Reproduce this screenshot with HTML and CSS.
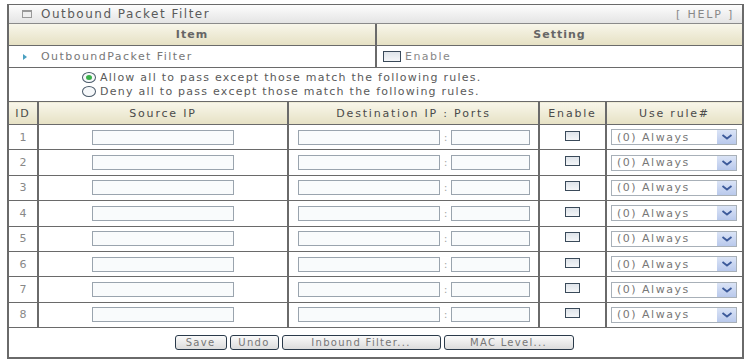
FILE: index.html
```html
<!DOCTYPE html>
<html lang="en">
<head>
  <meta charset="UTF-8">
  <title>Outbound Packet Filter</title>
  <link rel="stylesheet" href="styles.css">
</head>
<body>

<div class="panel">
  <div class="title-bar">
    <span class="title-icon"></span>
    <span class="title-text">Outbound Packet Filter</span>
    <a class="help-link" href="#">[ HELP ]</a>
  </div>

  <table class="item-table">
    <tr class="head-row">
      <th class="item-col">Item</th>
      <th>Setting</th>
    </tr>
    <tr>
      <td class="item-col"><span class="bullet"></span>OutboundPacket Filter</td>
      <td><label class="check-label"><input type="checkbox" class="box">Enable</label></td>
    </tr>
  </table>

  <div class="radio-box">
    <label><input type="radio" name="mode" class="radio" checked>Allow all to pass except those match the following rules.</label>
    <label><input type="radio" name="mode" class="radio">Deny all to pass except those match the following rules.</label>
  </div>

  <table class="rule-table">
    <tr class="head-row">
      <th class="c-id">ID</th>
      <th class="c-src">Source IP</th>
      <th class="c-dst">Destination IP : Ports</th>
      <th class="c-en">Enable</th>
      <th class="c-rule">Use rule#</th>
    </tr>
    <tbody id="rules"></tbody>
  </table>

  <div class="button-row">
    <button class="btn btn-save">Save</button>
    <button class="btn btn-undo">Undo</button>
    <button class="btn btn-in">Inbound Filter...</button>
    <button class="btn btn-mac">MAC Level...</button>
  </div>
</div>

<script>
function baueZeilen() {
  const tbody = document.getElementById('rules');
  let html = '';
  for (let i = 1; i <= 8; i++) {
    html += `<tr>
      <td class="c-id">${i}</td>
      <td class="c-src"><input type="text" class="ip-in"></td>
      <td class="c-dst"><input type="text" class="dst-in"><span class="colon">:</span><input type="text" class="port-in"></td>
      <td class="c-en"><input type="checkbox" class="box"></td>
      <td class="c-rule"><span class="select">(0) Always<span class="arrow"><svg width="12" height="8" viewBox="0 0 12 8"><path d="M1.5 2 L6 5.5 L10.5 2" fill="none" stroke="#3c5a9a" stroke-width="1.8"/></svg></span></span></td>
    </tr>`;
  }
  tbody.innerHTML = html;
}

baueZeilen();
</script>

</body>
</html>
```

FILE: styles.css
```css
body {
  margin: 0;
  background: #fff;
  font-family: "DejaVu Sans", Verdana, sans-serif;
  font-size: 11px;
  color: #777;
}
.panel {
  margin: 4px 0 0 7px;
  width: 733px;
  border: 2px solid #6a6a6a;
  border-top-width: 1px;
}
.title-bar {
  display: flex;
  align-items: center;
  height: 18px;
  padding: 0 8px 0 13px;
  background: linear-gradient(#fdfdfd, #e4e4e4);
  border-bottom: 1px solid #8a8a8a;
}
.title-icon {
  width: 8px;
  height: 5px;
  border: 1px solid #999;
  border-top-width: 2px;
  background: #eee;
  margin-right: 9px;
}
.title-text {
  color: #5a5a5a;
  font-size: 12px;
  letter-spacing: 1.5px;
}
.help-link {
  margin-left: auto;
  color: #888;
  text-decoration: none;
  letter-spacing: 1.8px;
}
table {
  width: 100%;
  border-collapse: collapse;
  table-layout: fixed;
}
.head-row th {
  background: linear-gradient(#f8f6ea, #e6e1c4);
  color: #4a4a4a;
  font-weight: normal;
  letter-spacing: 1.8px;
}
.item-table th {
  height: 21px;
  padding: 0;
  font-weight: bold;
  letter-spacing: 1px;
  color: #666;
  border-bottom: 1px solid #6a6a6a;
}
.item-table td {
  height: 21px;
  padding: 0;
  border-bottom: 1px solid #6a6a6a;
  letter-spacing: 1.45px;
}
.item-table .item-col {
  width: 366px;
  border-right: 2px solid #6a6a6a;
}
.item-table td.item-col {
  padding-left: 14px;
}
.bullet {
  display: inline-block;
  width: 0;
  height: 0;
  border-left: 4px solid #4aa0c0;
  border-top: 3px solid transparent;
  border-bottom: 3px solid transparent;
  margin-right: 14px;
}
.check-label {
  display: flex;
  align-items: center;
  padding-left: 6px;
  color: #888;
}
.box {
  appearance: none;
  margin: 0;
  width: 15px;
  height: 10px;
  border: 1px solid #3a4a5a;
  background: linear-gradient(#dfe4ea, #f4f6f8);
}
.check-label .box {
  width: 18px;
  height: 11px;
  margin-right: 4px;
}
.radio-box {
  display: flex;
  flex-direction: column;
  justify-content: center;
  gap: 1px;
  height: 33px;
  padding-left: 73px;
  color: #5a5a5a;
  letter-spacing: 1.25px;
}
.radio-box label {
  display: flex;
  align-items: center;
}
.radio {
  appearance: none;
  margin: 0 4px 0 0;
  width: 14px;
  height: 11px;
  border: 1px solid #4a5a6a;
  border-radius: 50%;
  background: #f6f8fa;
  position: relative;
}
.radio:checked::after {
  content: "";
  position: absolute;
  left: 3px;
  top: 2px;
  width: 6px;
  height: 5px;
  border-radius: 50%;
  background: #3ab04a;
}
.rule-table th, .rule-table td {
  padding: 0;
  border: 1px solid #6a6a6a;
  border-left-width: 2px;
  text-align: center;
}
.rule-table tr > :first-child {
  border-left: none;
}
.rule-table tr > :last-child {
  border-right: none;
}
.rule-table th {
  height: 22px;
  border-top: 1px solid #6a6a6a;
}
.rule-table td {
  height: 24.4px;
}
.c-id { width: 28px; }
.c-src { width: 248px; }
.c-dst { width: 249px; }
.c-en { width: 65px; }
.rule-table td.c-id {
  color: #888;
}
.rule-table td.c-dst, .rule-table td.c-rule {
  text-align: left;
}
input[type="text"] {
  box-sizing: border-box;
  height: 15px;
  margin: 0;
  padding: 0;
  border: 1px solid #9aa4ae;
  background: #f9fbfc;
  vertical-align: middle;
}
.ip-in { width: 142px; }
.dst-in { width: 142px; margin-left: 9px !important; }
.port-in { width: 79px; }
.colon {
  display: inline-block;
  width: 11px;
  text-align: center;
  color: #aaa;
  vertical-align: middle;
}
.select {
  display: flex;
  align-items: center;
  box-sizing: border-box;
  width: 126px;
  height: 16px;
  margin-left: 4px;
  padding-left: 5px;
  border: 1px solid #a8b0b8;
  background: #fff;
  color: #777;
  letter-spacing: 1.5px;
}
.arrow {
  display: flex;
  align-items: center;
  justify-content: center;
  margin-left: auto;
  width: 19px;
  height: 14px;
  background: linear-gradient(#dbe4f6, #b9c9ec);
}
.button-row {
  display: flex;
  justify-content: center;
  gap: 3px;
  align-items: center;
  height: 29px;
  padding-right: 3px;
}
.btn {
  height: 15px;
  padding: 0;
  border: 1px solid #2a3a4a;
  border-radius: 3px;
  background: linear-gradient(#fafafa, #dcdcdc);
  font-family: "DejaVu Sans", Verdana, sans-serif;
  font-size: 10px;
  color: #777;
  letter-spacing: 1.3px;
}
.btn-save { width: 52px; }
.btn-undo { width: 49px; }
.btn-in { width: 159px; }
.btn-mac { width: 130px; }
```
